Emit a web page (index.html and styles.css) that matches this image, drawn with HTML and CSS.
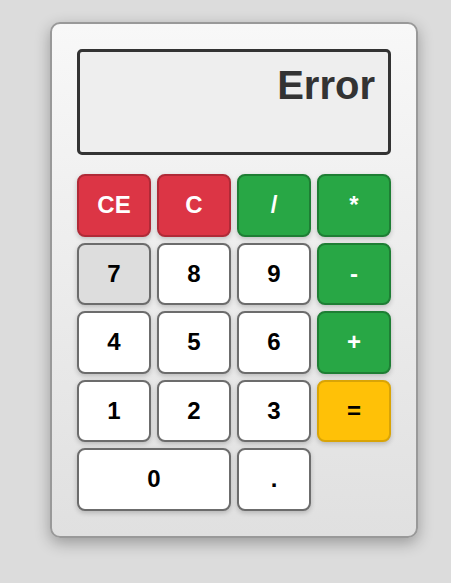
FILE: index.html
```html
<!DOCTYPE html>
<html lang="en">
<head>
<meta charset="utf-8">
<title>Calculator</title>
<link rel="stylesheet" href="styles.css">
</head>
<body>
<div class="calculator">
  <div class="display">Error</div>
  <div class="keys">
    <button class="key red">CE</button>
    <button class="key red">C</button>
    <button class="key green">/</button>
    <button class="key green">*</button>
    <button class="key active">7</button>
    <button class="key">8</button>
    <button class="key">9</button>
    <button class="key green">-</button>
    <button class="key">4</button>
    <button class="key">5</button>
    <button class="key">6</button>
    <button class="key green">+</button>
    <button class="key">1</button>
    <button class="key">2</button>
    <button class="key">3</button>
    <button class="key yellow">=</button>
    <button class="key wide">0</button>
    <button class="key">.</button>
  </div>
</div>
</body>
</html>
```

FILE: styles.css
```css
html {
  background: #dcdcdc;
  min-height: 100%;
}
body {
  margin: 0;
  padding: 22px 0 0 50px;
  min-height: 583px;
  box-sizing: border-box;
  background: #dcdcdc;
  font-family: "Liberation Sans", Arial, sans-serif;
}
.calculator {
  width: 314px;
  padding: 25px;
  border: 2px solid #999;
  border-radius: 10px;
  background: linear-gradient(to bottom, #f8f8f8, #e0e0e0);
  box-shadow: 0 5px 15px rgba(0, 0, 0, 0.3);
}
.display {
  box-sizing: content-box;
  border: 3px solid #333;
  border-radius: 5px;
  background: #eee;
  color: #333;
  font-size: 40px;
  font-weight: bold;
  text-align: right;
  padding: 11px 13px 0 13px;
  height: 89px;
  margin-bottom: 19px;
}
.keys {
  display: grid;
  grid-template-columns: repeat(4, 1fr);
  gap: 6px;
}
.key {
  font-family: "Liberation Sans", Arial, sans-serif;
  font-size: 24px;
  font-weight: bold;
  line-height: 28.6px;
  padding: 15px 0;
  margin: 0;
  border: 2px solid #6c6c6c;
  border-radius: 8px;
  background: #fff;
  color: #000;
  box-shadow: 0 2px 5px rgba(0, 0, 0, 0.2);
}
.key.active {
  background: #dddddd;
}
.key.red {
  background: #dc3545;
  border-color: #b02a37;
  color: #fff;
}
.key.green {
  background: #28a745;
  border-color: #1e7e34;
  color: #fff;
}
.key.yellow {
  background: #ffc107;
  border-color: #d9a406;
  color: #000;
}
.key.wide {
  grid-column: span 2;
}
```
